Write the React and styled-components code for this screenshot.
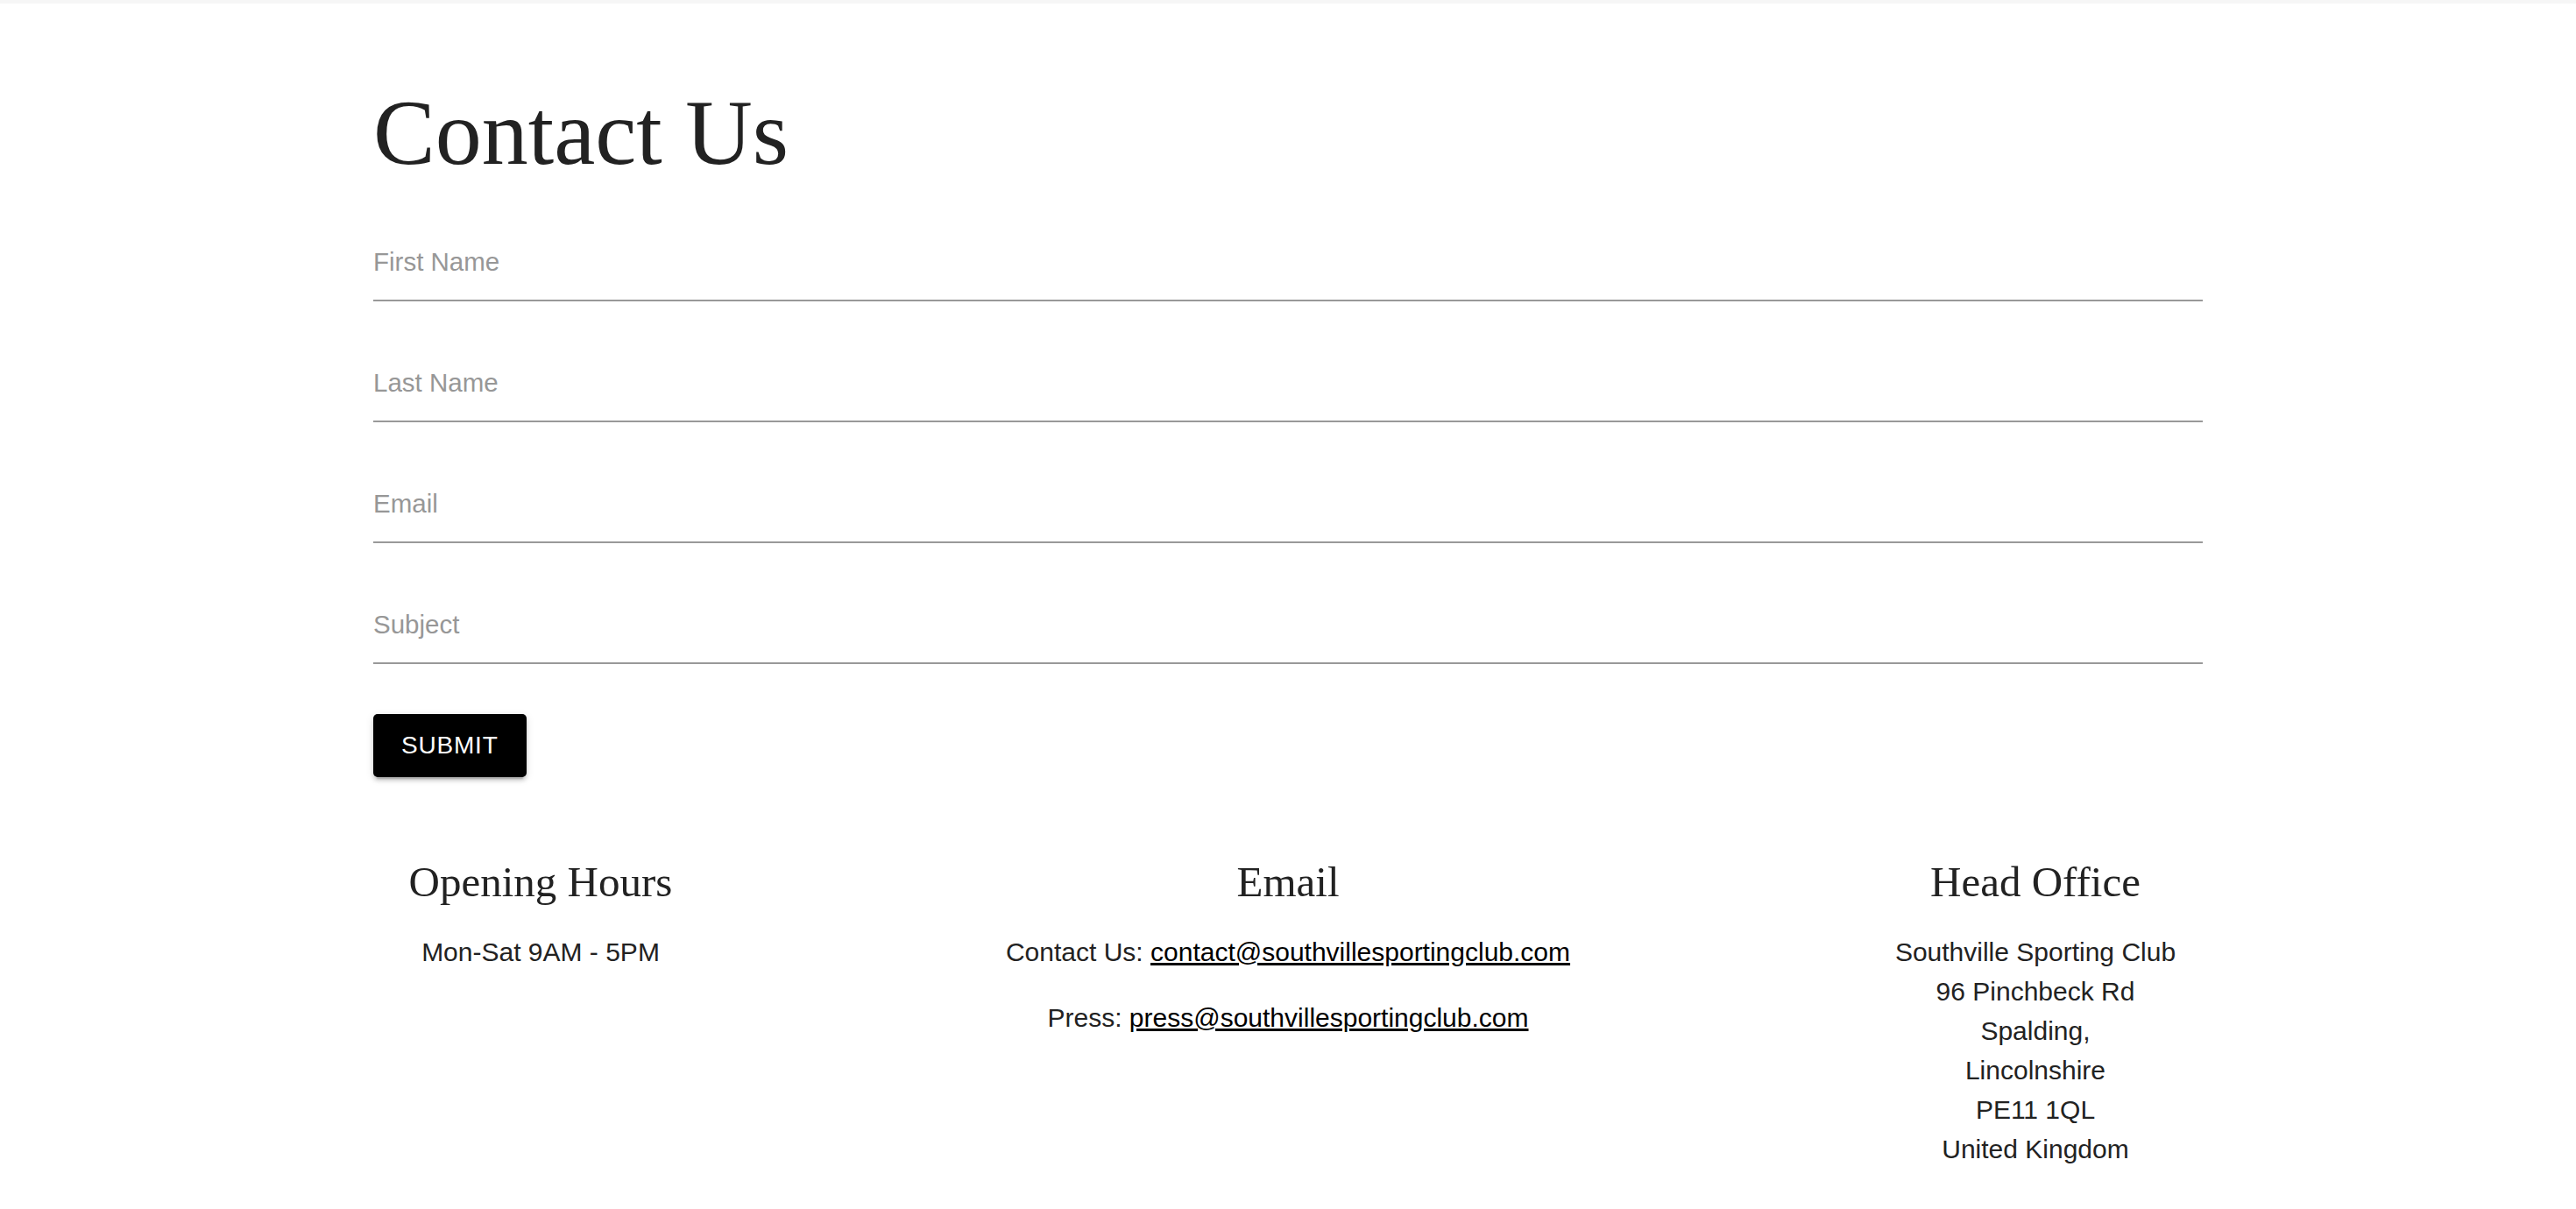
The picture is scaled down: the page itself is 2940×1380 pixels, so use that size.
import React from 'react';
import styled, { createGlobalStyle } from 'styled-components';

const GlobalStyle = createGlobalStyle`
  body {
    margin: 0;
    background: #ffffff;
    font-family: "Liberation Sans", Arial, sans-serif;
  }
`;

const TopBar = styled.div`
  height: 4px;
  background: #f6f6f6;
`;

const Page = styled.main`
  max-width: 2088px;
  margin: 0 auto;
  padding-top: 94px;
`;

const Title = styled.h1`
  margin: 0 0 75px;
  font-family: "Liberation Serif", "Times New Roman", serif;
  font-size: 106px;
  font-weight: 400;
  line-height: 108px;
  color: #222222;
`;

const Fields = styled.form`
  display: flex;
  flex-direction: column;
  gap: 75px;
`;

const Input = styled.input`
  box-sizing: border-box;
  width: 100%;
  height: 63px;
  padding: 0 0 25px;
  border: none;
  border-bottom: 2px solid #999999;
  outline: none;
  background: transparent;
  font-family: "Liberation Sans", Arial, sans-serif;
  font-size: 29.5px;
  line-height: 36px;
  color: #222222;

  &::placeholder {
    color: #979797;
  }
`;

const SubmitButton = styled.button`
  display: block;
  margin-top: 57px;
  height: 72px;
  padding: 0 32px;
  border: none;
  border-radius: 5px;
  background: #000000;
  color: #ffffff;
  font-family: "Liberation Sans", Arial, sans-serif;
  font-size: 28px;
  letter-spacing: 0.8px;
  text-transform: uppercase;
  box-shadow: 0 6px 2px -4px rgba(0, 0, 0, 0.2), 0 4px 4px 0 rgba(0, 0, 0, 0.14),
    0 2px 10px 0 rgba(0, 0, 0, 0.12);
  cursor: pointer;
`;

const Footer = styled.section`
  display: flex;
  justify-content: space-between;
  margin-top: 91px;
`;

const Column = styled.div`
  flex: none;
  width: ${(p) => (p.$wide ? 'auto' : '382px')};
  text-align: center;
`;

const ColumnTitle = styled.h2`
  margin: 0;
  font-family: "Liberation Serif", "Times New Roman", serif;
  font-size: 49px;
  font-weight: 400;
  line-height: 58px;
  color: #222222;
`;

const Text = styled.p`
  margin: 28px 0 0;
  font-size: 30px;
  line-height: 45px;
  color: #222222;

  & + & {
    margin-top: 30px;
  }
`;

const MailLink = styled.a`
  color: #000000;
  text-decoration: underline;
`;

const address = [
  'Southville Sporting Club',
  '96 Pinchbeck Rd',
  'Spalding,',
  'Lincolnshire',
  'PE11 1QL',
  'United Kingdom',
];

export default function App() {
  return (
    <>
      <GlobalStyle />
      <TopBar />
      <Page>
        <Title>Contact Us</Title>
        <Fields onSubmit={(e) => e.preventDefault()}>
          <Input placeholder="First Name" />
          <Input placeholder="Last Name" />
          <Input placeholder="Email" />
          <Input placeholder="Subject" />
        </Fields>
        <SubmitButton type="button">Submit</SubmitButton>
        <Footer>
          <Column>
            <ColumnTitle>Opening Hours</ColumnTitle>
            <Text>Mon-Sat 9AM - 5PM</Text>
          </Column>
          <Column $wide>
            <ColumnTitle>Email</ColumnTitle>
            <Text>
              Contact Us:{' '}
              <MailLink href="mailto:contact@southvillesportingclub.com">
                contact@southvillesportingclub.com
              </MailLink>
            </Text>
            <Text>
              Press:{' '}
              <MailLink href="mailto:press@southvillesportingclub.com">
                press@southvillesportingclub.com
              </MailLink>
            </Text>
          </Column>
          <Column>
            <ColumnTitle>Head Office</ColumnTitle>
            <Text>
              {address.map((line, i) => (
                <React.Fragment key={line}>
                  {line}
                  {i < address.length - 1 && <br />}
                </React.Fragment>
              ))}
            </Text>
          </Column>
        </Footer>
      </Page>
    </>
  );
}
